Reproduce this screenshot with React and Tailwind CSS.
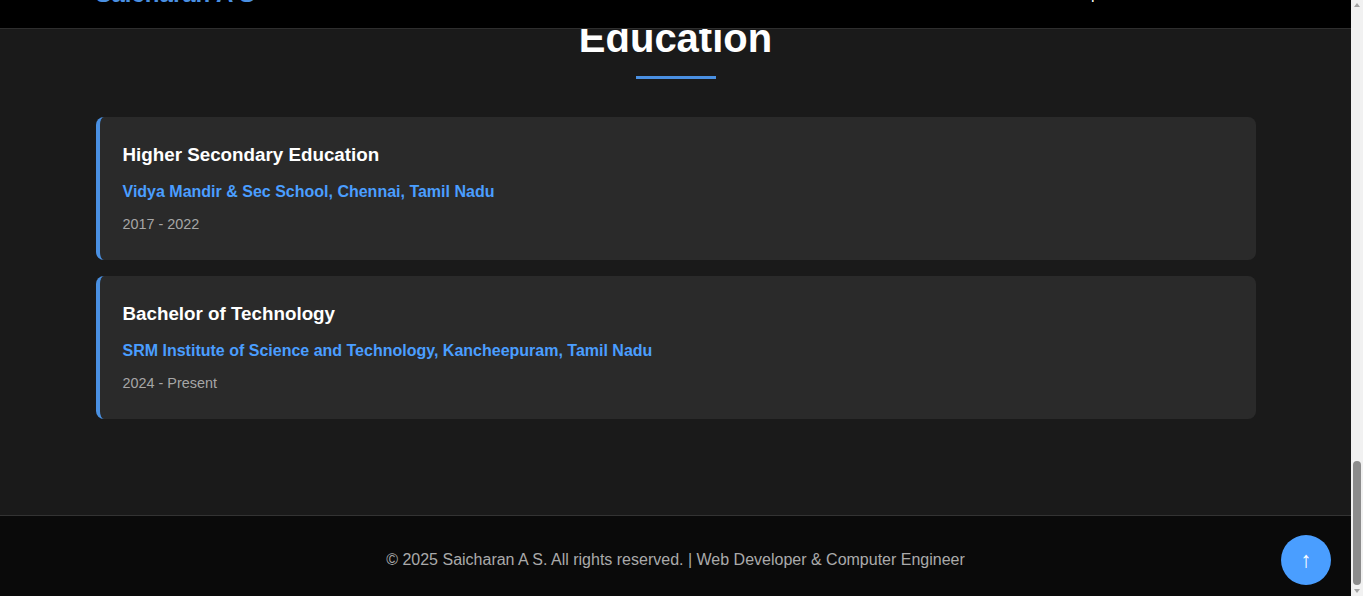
import React from "react";

const education = [
  {
    title: "Higher Secondary Education",
    place: "Vidya Mandir & Sec School, Chennai, Tamil Nadu",
    years: "2017 - 2022",
  },
  {
    title: "Bachelor of Technology",
    place: "SRM Institute of Science and Technology, Kancheepuram, Tamil Nadu",
    years: "2024 - Present",
  },
];

export default function App() {
  return (
    <div
      className="flex h-[596px] w-full overflow-hidden bg-[#1a1a1a]"
      style={{ fontFamily: '"Liberation Sans", Arial, sans-serif' }}
    >
      <div className="relative flex min-w-0 flex-1 flex-col">
        {/* fixed header (mostly slid up out of view) */}
        <header className="absolute inset-x-0 top-0 z-10 h-[29px] overflow-hidden border-b border-[#2e2e2e] bg-black">
          <div className="mx-auto flex max-w-[1200px] items-start justify-between px-5">
            <span className="-mt-[20px] text-[24px] font-bold leading-[28px] text-[#4a90e2]">
              Saicharan A S
            </span>
            <nav className="-mt-[20px] flex gap-12 text-[16px] leading-[28px] text-white">
              <span>Experience</span>
              <span>Contact</span>
            </nav>
          </div>
        </header>

        <main className="flex-1 bg-[#1a1a1a]">
          <div className="mx-auto max-w-[1200px] px-5 pt-[14px]">
            <h2 className="text-center text-[40px] font-bold leading-[48px] text-white">
              Education
            </h2>
            <div className="mx-auto mt-[14px] h-[3px] w-[80px] bg-[#4a90e2]" />
            <div className="mt-[38px] flex flex-col gap-4">
              {education.map((e) => (
                <div
                  key={e.title}
                  className="rounded-lg border-l-4 border-[#4a90e2] bg-[#2a2a2a] pb-[26px] pl-[23px] pr-6 pt-[26px]"
                >
                  <h3 className="text-[18.8px] font-bold leading-[24px] text-white">
                    {e.title}
                  </h3>
                  <p className="mt-[13px] text-[16px] font-bold leading-[24px] text-[#4a9eff]">
                    {e.place}
                  </p>
                  <p className="mt-[10px] text-[14.4px] leading-[20px] text-[#a6a6a6]">
                    {e.years}
                  </p>
                </div>
              ))}
            </div>
          </div>
        </main>

        <footer className="h-[81px] border-t border-[#333] bg-[#0a0a0a] pt-[34px] text-center">
          <p className="text-[16px] leading-[20px] text-[#aaaaaa]">
            © 2025 Saicharan A S. All rights reserved. | Web Developer &amp; Computer Engineer
          </p>
        </footer>

        {/* scroll-to-top button */}
        <button className="absolute bottom-[11px] right-[20px] flex h-[50px] w-[50px] items-center justify-center rounded-full bg-[#4a9eff] text-[22px] font-light leading-none text-white">
          ↑
        </button>
      </div>

      {/* scrollbar */}
      <div className="flex w-[12px] flex-col items-center bg-[#f1f1f1]">
        <svg width="8" height="8" viewBox="0 0 8 8" className="mt-[1px]">
          <path d="M1 6 L4 2 L7 6 Z" fill="#a3a3a3" />
        </svg>
        <div className="flex-1" />
        <div className="h-[124px] w-[8px] rounded-full bg-[#8c8c8c]" />
        <svg width="8" height="8" viewBox="0 0 8 8" className="mb-[1px] mt-[2px]">
          <path d="M1 2 L4 6 L7 2 Z" fill="#a3a3a3" />
        </svg>
      </div>
    </div>
  );
}
